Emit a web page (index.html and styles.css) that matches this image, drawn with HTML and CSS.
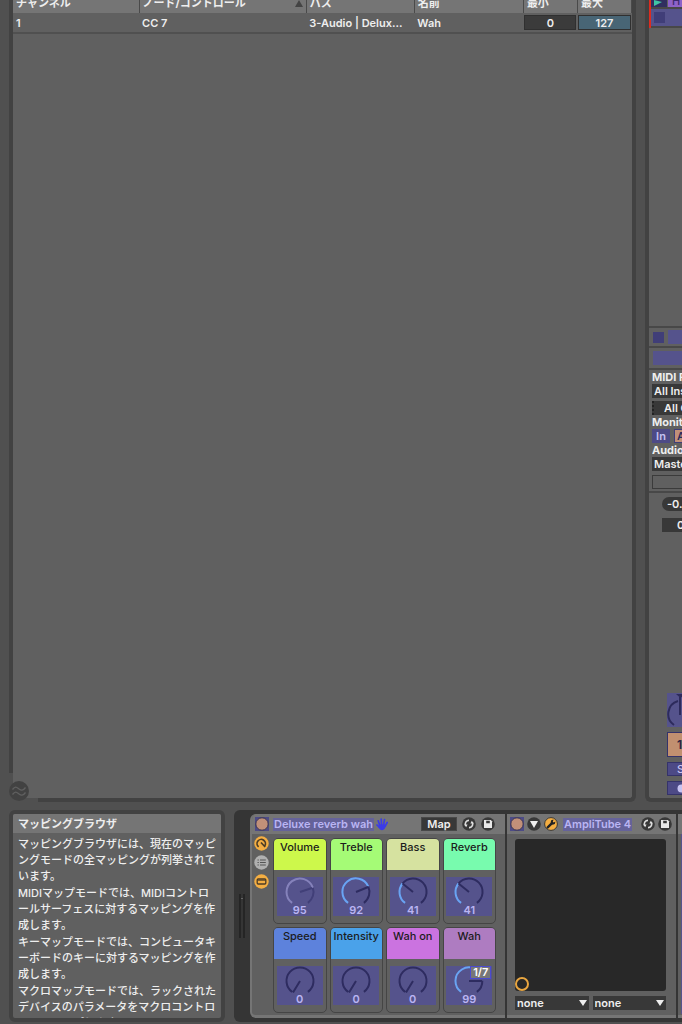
FILE: index.html
```html
<!DOCTYPE html>
<html lang="ja">
<head>
<meta charset="utf-8">
<title>マッピングブラウザ</title>
<link rel="stylesheet" href="styles.css">
</head>
<body>
<svg class="defs" aria-hidden="true">
  <symbol id="swap" viewBox="0 0 14 14"><circle cx="7" cy="7" r="6.8" fill="#383838"/><path d="M3.5 8A3.5 3.5 0 0 1 7 3.4M10.5 6A3.5 3.5 0 0 1 7 10.6" fill="none" stroke="#ddd" stroke-width="1.6"/><path d="M2 7.4h3.6L4.2 10.2zM8.4 6.6H12L9.8 3.8z" fill="#ddd"/></symbol>
  <symbol id="save" viewBox="0 0 14 14"><circle cx="7" cy="7" r="6.8" fill="#383838"/><path d="M3 3h6.8L11 4.2V11H3z" fill="#e8e8e8"/><path d="M5.2 3.8h3.6v2.4H5.2z" fill="#383838"/></symbol>
  <symbol id="power" viewBox="0 0 14 14"><path d="M0 0h14v14H0z" fill="#4d4b86"/><circle cx="7" cy="7" r="6.2" fill="#c19079" stroke="#383551"/></symbol>
  <symbol id="down" viewBox="0 0 8 6"><path d="M0 0h8L4 6z" fill="#eee"/></symbol>
</svg>
<main class="top">
  <section class="mapping">
    <table class="map-table">
      <colgroup><col class="c-channel"><col class="c-note"><col class="c-path"><col class="c-name"><col class="c-val"><col class="c-val"></colgroup>
      <thead><tr><th>チャンネル</th><th><span class="sorted">ノード/コントロール<svg viewBox="0 0 8 7" width="8" height="7"><path d="M4 0l4 7H0z" fill="#444"/></svg></span></th><th>パス</th><th>名前</th><th>最小</th><th>最大</th></tr></thead>
      <tbody><tr><td>1</td><td>CC 7</td><td>3-Audio | Delux...</td><td>Wah</td><td class="num"><input aria-label="最小" value="0"></td><td class="num"><input class="active" aria-label="最大" value="127"></td></tr></tbody>
    </table>
    <button class="wave" aria-label="Groove"><svg viewBox="0 0 20 20" width="20" height="20"><circle cx="10" cy="10" r="10" fill="#424242"/><path d="M3.5 8.5c3-4 4.500-2 6.500-.5s4 2 6.500-1.500M3.500 13.500c3-4 4.500-2 6.500-.5s4 2 6.500-1.500" fill="none" stroke="#606060" stroke-width="1.3"/></svg></button>
  </section>
  <section class="mixer">
    <div class="clips">
      <div class="clip"><button class="launch" aria-label="Launch"><svg viewBox="0 0 8 8" width="8" height="8"><path d="M0 0l8 2L0 6z" fill="#3fc6a4"/></svg></button><span class="clip-name">H</span></div>
      <div class="slot"><i></i></div>
    </div>
    <div class="track-io">
      <div class="stop"><i></i><b></b></div>
      <div class="send"><b></b></div>
      <div class="io">
        <label for="mf">MIDI From</label>
        <select id="mf"><option>All Ins</option></select>
        <select class="chan" aria-label="Channel"><option>All Channels</option></select>
        <span>Monitor</span>
        <div class="monitor"><button>In</button><button class="auto">Auto</button></div>
        <label for="at">Audio To</label>
        <select id="at"><option>Master</option></select>
        <div class="blank"></div>
      </div>
      <div class="level"><span class="peak">-0.00</span><span class="vol">0</span></div>
    </div>
    <div class="track-foot">
      <svg viewBox="0 0 34 34" width="34" height="34"><path d="M0 0h34v34H0z" fill="#55538c"/><path d="M7 32A13.500 13.500 0 0 1 11 8" fill="none" stroke="#2d2b5c" stroke-width="2"/><path d="M13 4V22" stroke="#2d2b5c" stroke-width="2"/><path d="M9 1h9l-4.500 4z" fill="#2d2b5c"/></svg>
      <button class="number">1</button>
      <button>S</button>
      <button aria-label="Arm"><svg viewBox="0 0 9 9" width="9" height="9"><circle cx="4.5" cy="4.5" r="4" fill="#c7c3f2"/><path d="M5 1.5a3 3 0 0 1 0 6z" fill="#353269"/></svg></button>
    </div>
  </section>
</main>
<footer class="bottom">
  <aside class="info">
    <h2>マッピングブラウザ</h2>
    <div class="help">
      <p>マッピングブラウザには、現在のマッピ<br>ングモードの全マッピングが列挙されて<br>います。</p>
      <p>MIDIマップモードでは、MIDIコントロ<br>ールサーフェスに対するマッピングを作<br>成します。</p>
      <p>キーマップモードでは、コンピュータキ<br>ーボードのキーに対するマッピングを作<br>成します。</p>
      <p>マクロマップモードでは、ラックされた<br>デバイスのパラメータをマクロコントロ<br>ールにマップします。</p>
    </div>
  </aside>
  <section class="devices">
    <div class="grip"></div>
    <article class="device rack">
      <header>
        <svg class="ico"><use href="#power"/></svg>
        <h3>Deluxe reverb wah</h3>
        <svg class="hand" viewBox="0 0 12 13" width="12" height="13"><g fill="none" stroke="#3b3be8" stroke-width="1.7" stroke-linecap="round"><path d="M3.8 7.5L2.2 2.8M5.6 7L5.2 1.2M7.6 7L8.5 1.6M9 8.5l2.2-4M3.5 9.5L1 7"/></g><path d="M3 6.5h6.5L9 10.5Q6.5 13.5 4 11.5L2 9z" fill="#3b3be8"/></svg>
        <button class="map-btn">Map</button>
        <svg class="ico"><use href="#swap"/></svg>
        <svg class="ico end"><use href="#save"/></svg>
      </header>
      <div class="rack-body">
        <div class="rail">
          <svg viewBox="0 0 15 15"><circle cx="7.5" cy="7.5" r="7.2" fill="#f4ae42"/><path d="M4.6 10.900A4.200 4.200 0 1 1 10.700 10M7 6.500l4.200 4.500" fill="none" stroke="#4d3d26" stroke-width="1.7"/></svg>
          <svg viewBox="0 0 15 15"><circle cx="7.5" cy="7.5" r="7.2" fill="#b0b0b0"/><path d="M3.5 5h1.3M6 5h5.8M3.5 7.5h1.3M6 7.5h5.8M3.5 10h1.3M6 10h5.8" stroke="#555" stroke-width="1.2"/></svg>
          <svg viewBox="0 0 15 15"><circle cx="7.5" cy="7.5" r="7.2" fill="#f4ae42"/><rect x="3.2" y="5" width="8.6" height="5" rx="1" fill="none" stroke="#4d3d26" stroke-width="1.3"/><path d="M3.5 6.2h8" stroke="#4d3d26"/></svg>
        </div>
        <div class="macros">
          <div class="macro volume"><h4>Volume</h4><div class="dial"><svg viewBox="0 0 46 28"><path class="rest dim" d="M35.8 10.6A13.5 13.5 0 0 1 30.9 25.9"/><path class="on dim" d="M15.1 25.9A13.5 13.5 0 1 1 35.8 10.6"/><path class="rest dim" d="M23 15L35 11"/></svg><output>95</output></div></div>
          <div class="macro treble"><h4>Treble</h4><div class="dial"><svg viewBox="0 0 46 28"><path class="rest" d="M35.2 9.3A13.5 13.5 0 0 1 30.9 25.9"/><path class="on" d="M15.1 25.9A13.5 13.5 0 1 1 35.2 9.3"/><path class="rest" d="M23 15L35.2 10"/></svg><output>92</output></div></div>
          <div class="macro bass"><h4>Bass</h4><div class="dial"><svg viewBox="0 0 46 28"><path class="rest" d="M12.5 6.5A13.5 13.5 0 1 1 30.9 25.9"/><path class="on" d="M15.1 25.9A13.5 13.5 0 0 1 12.5 6.5"/><path class="rest" d="M23 15L12.5 6.5"/></svg><output>41</output></div></div>
          <div class="macro reverb"><h4>Reverb</h4><div class="dial"><svg viewBox="0 0 46 28"><path class="rest" d="M12.5 6.5A13.5 13.5 0 1 1 30.9 25.9"/><path class="on" d="M15.1 25.9A13.5 13.5 0 0 1 12.5 6.5"/><path class="rest" d="M23 15L12.5 6.5"/></svg><output>41</output></div></div>
          <div class="macro speed"><h4>Speed</h4><div class="dial"><svg viewBox="0 0 46 28"><path class="rest" d="M15.1 25.9A13.5 13.5 0 1 1 30.9 25.9M23 15L16 26.5"/></svg><output>0</output></div></div>
          <div class="macro intensity"><h4>Intensity</h4><div class="dial"><svg viewBox="0 0 46 28"><path class="rest" d="M15.1 25.9A13.5 13.5 0 1 1 30.9 25.9M23 15L16 26.5"/></svg><output>0</output></div></div>
          <div class="macro wahon"><h4>Wah on</h4><div class="dial"><svg viewBox="0 0 46 28"><path class="rest" d="M15.1 25.9A13.5 13.5 0 1 1 30.9 25.9M23 15L16 26.5"/></svg><output>0</output></div></div>
          <div class="macro wah"><h4>Wah</h4><div class="dial"><svg viewBox="0 0 46 28"><path class="rest" d="M36.3 14.7A13.5 13.5 0 0 1 30.9 25.9"/><path class="on" d="M15.1 25.9A13.5 13.5 0 1 1 36.3 12.7"/><path class="rest" d="M23 15L36 15"/></svg><output>99</output><span class="tag">1/7</span></div></div>
        </div>
      </div>
    </article>
    <article class="device amp">
      <header>
        <svg class="ico"><use href="#power"/></svg>
        <svg class="ico" viewBox="0 0 14 14"><circle cx="7" cy="7" r="6.8" fill="#383838"/><path d="M3 4h8l-4 7z" fill="#eee"/></svg>
        <svg class="ico" viewBox="0 0 14 14"><circle cx="7" cy="7" r="6.4" fill="#f4ae42" stroke="#383838"/><path d="M3.7 10.4L8 6.2" stroke="#222" stroke-width="2.4" stroke-linecap="round"/><path d="M6.6 5.5L7.2 3.3 9.6 2.6 8.8 4.7 9.6 5.4 11.5 4.6 10.8 7 8.6 7.7z" fill="#222"/></svg>
        <h3>AmpliTube 4</h3>
        <svg class="ico push"><use href="#swap"/></svg>
        <svg class="ico"><use href="#save"/></svg>
      </header>
      <div class="pad"><i></i></div>
      <div class="params">
        <div class="pick"><select aria-label="X"><option>none</option></select><svg><use href="#down"/></svg></div>
        <div class="pick"><select aria-label="Y"><option>none</option></select><svg><use href="#down"/></svg></div>
      </div>
    </article>
    <article class="device next"><header></header><div class="edge"></div></article>
  </section>
</footer>
</body>
</html>
```

FILE: styles.css
```css
* { box-sizing: border-box; }
body { margin: 0; height: 100vh; display: flex; flex-direction: column; overflow: hidden; background: #505050; color: #eee; font: 500 11px/16px Inter, "Noto Sans CJK JP", sans-serif; }
h2, h3, h4, p { margin: 0; font-size: 11px; }
button, select, input { font: inherit; color: inherit; margin: 0; padding: 0; border: 0; border-radius: 0; background: none; }
select { appearance: none; }
svg { display: block; flex: none; }
.defs { position: absolute; width: 0; height: 0; }

.top { flex: 1; min-height: 0; display: flex; gap: 9px; padding-left: 9px; }
.mapping { position: relative; flex: 1; min-width: 0; border: 4px solid #424242; border-top: 0; border-radius: 0 0 6px 6px; background: #606060; }
.mapping::after { content: ""; position: absolute; left: -4px; bottom: -4px; width: 25px; height: 25px; border: solid #505050; border-width: 0 0 4px 4px; }
.wave { position: absolute; z-index: 1; left: -4px; bottom: -3px; }
.map-table { width: 100%; margin-top: -7px; table-layout: fixed; border-collapse: collapse; }
.c-channel { width: 126px; }
.c-note { width: 167px; }
.c-path { width: 108px; }
.c-name { width: 109px; }
.c-val { width: 54px; }
.map-table th { height: 20px; padding: 0 3px; background: #757575; border-right: 1px solid #4a4a4a; text-align: left; font-weight: 700; line-height: 18px; white-space: nowrap; }
.map-table td { height: 20px; padding: 0 3px; border-bottom: 2px solid #505050; font-weight: 600; white-space: nowrap; }
.map-table td.num { padding: 0 1px; }
.sorted { display: flex; align-items: center; justify-content: space-between; }
.map-table input { display: block; width: 100%; height: 15px; border: 1px solid #303030; background: #3b3b3b; text-align: center; }
.map-table input.active { background: #486575; }

.mixer { flex: 0 0 37px; display: flex; flex-direction: column; overflow: hidden; border: solid #424242; border-width: 0 0 4px 4px; border-radius: 0 0 0 6px; background: #606060; white-space: nowrap; }
.clips { border-left: 2px solid #dc2c20; }
.clip { display: flex; gap: 1px; height: 9px; overflow: hidden; border-bottom: 2px solid #484848; }
.launch { width: 16px; padding-left: 3px; background: #302e5f; }
.clip-name { flex: 1; padding-left: 4px; background: #8d62c8; color: #3b2a6e; line-height: 2px; }
.slot, .stop { display: flex; gap: 4px; }
.slot { height: 19px; padding: 3px; background: #55538c; border-bottom: 2px solid #484848; }
.slot i, .stop i { flex: none; width: 11px; height: 11px; background: #403e78; }
.track-io { margin-top: 298px; border-top: 2px solid #484848; }
.stop { height: 20px; padding: 2px 0 2px 4px; align-items: center; border-bottom: 2px solid #484848; }
.stop b, .send b { flex: 1; height: 14px; background: #55538c; }
.send { display: flex; padding: 3px 0 3px 4px; border-bottom: 2px solid #484848; }
.io { display: flex; flex-direction: column; padding: 0 0 2px 3px; border-bottom: 2px solid #484848; font-weight: 600; }
.io label, .io > span { line-height: 14px; overflow: hidden; font-weight: 700; }
.io select { width: 80px; height: 14px; padding-left: 2px; background: #383838; line-height: 14px; }
.io .chan { margin-top: 3px; padding-left: 10px; border-left: 2px dotted #222; }
.monitor { display: flex; gap: 4px; height: 14px; line-height: 14px; }
.monitor button { flex: none; width: 18px; background: #4d4a86; color: #c7c3f2; }
.monitor .auto { width: 40px; padding-left: 2px; background: #c19079; border: 1px solid #403e78; color: #2d2b5c; text-align: left; line-height: 12px; }
.blank { height: 14px; margin-top: 4px; border: 1px solid #3b3b3b; border-right: 0; }
.level { display: grid; gap: 7px; padding: 4px 0 0 13px; font-weight: 600; line-height: 14px; }
.level span { width: 50px; height: 14px; background: #383838; }
.peak { padding-left: 5px; border-radius: 7px; }
.vol { padding-left: 15px; }
.track-foot { display: grid; gap: 5px; justify-items: start; margin-top: auto; padding: 0 0 3px 18px; }
.track-foot button { display: flex; align-items: center; width: 40px; height: 14px; padding-left: 9px; background: #4d4a86; border: 1px solid #35336a; color: #c7c3f2; }
.track-foot button.number { height: 25px; background: #c19070; color: #2d2444; font-size: 12px; font-weight: 700; }

.bottom { flex: none; display: flex; gap: 9px; height: 222px; padding: 8px 0 2px 9px; }
.info { flex: none; width: 216px; overflow: hidden; border: 4px solid #424242; border-radius: 6px; background: #606060; }
.info h2 { height: 19px; padding: 0 5px; background: #757575; line-height: 21px; font-weight: 700; }
.help { display: grid; gap: 1px; padding: 3px 0 0 5px; white-space: nowrap; }
.devices { flex: 1; min-width: 0; display: flex; gap: 2px; overflow: hidden; padding: 4px 0; border-radius: 6px 0 0 6px; background: #353535; }
.grip { flex: none; width: 6px; height: 44px; margin: 80px 3px 0 5px; border: solid #252525; border-width: 0 2px; background: linear-gradient(#666, #666) 0 4px / 6px 1px no-repeat border-box; }
.device { background: #606060; border-bottom: 3px solid #757575; }
.device header { display: flex; align-items: center; height: 20px; background: #757575; }
.device h3 { padding: 0 1px; background: #65629a; color: #bab5f3; font-weight: 600; line-height: 13px; white-space: nowrap; }
.ico { width: 14px; height: 14px; }
.rack { flex: none; width: 255px; border-left: 2px solid #757575; border-radius: 6px 0 0 6px; overflow: hidden; }
.rack header { padding: 0 10px 0 3px; }
.rack h3 { margin: 0 2px 0 4px; }
.map-btn { width: 36px; height: 14px; margin: 0 5px 0 auto; border: 1px solid #484848; background: #383838; line-height: 12px; font-weight: 600; }
.end { margin-left: 5px; }
.rack-body { display: flex; gap: 4px; padding: 4px 9px 0 2px; }
.rail { display: grid; gap: 4px; align-content: start; margin-top: -2px; }
.rail svg { width: 15px; height: 15px; }
.macros { flex: 1; display: grid; grid-template-columns: repeat(4, 1fr); gap: 3px; }
.macro { height: 86px; border: 1px solid #454545; border-radius: 5px; }
.macro h4 { height: 31px; margin-bottom: 7px; border-radius: 4px 4px 0 0; color: #1c1c1c; font-weight: 500; line-height: 17px; text-align: center; white-space: nowrap; }
.dial { position: relative; width: 46px; height: 39px; margin: 0 auto; background: #55538c; color: #bab5f3; text-align: center; font-weight: 600; line-height: 11px; }
.dial svg { width: 46px; height: 28px; }
.dial path { fill: none; stroke-width: 2; }
.dial output { display: block; }
.on { stroke: #69a4f3; }
.rest { stroke: #2e2c60; }
.on.dim { stroke: #8582bb; }
.rest.dim { stroke: #413f78; }
.volume h4 { background: #cdf84b; }
.treble h4 { background: #a5fb76; }
.bass h4 { background: #d6e2a0; }
.reverb h4 { background: #78fbae; }
.speed h4 { background: #5d82dc; }
.intensity h4 { background: #4aa2ea; }
.wahon h4 { background: #cb73e0; }
.wah h4 { background: #ae7cc1; }
.tag { position: absolute; right: 1px; top: 0; width: 21px; height: 13px; border: 1px solid #4b4bd0; background: #777; color: #fff; }

.amp { flex: none; width: 169px; }
.amp header { gap: 3px; padding: 0 4px 0 3px; }
.amp h3 { margin-left: 2px; }
.push { margin-left: auto; }
.pad { display: flex; align-items: flex-end; height: 152px; margin: 5px 10px 5px 8px; border-radius: 3px; background: #282828; }
.pad i { width: 14px; height: 14px; border: 2px solid #e9a640; border-radius: 50%; }
.params { display: grid; grid-template-columns: 1fr 1fr; gap: 4px; margin: 0 10px 0 8px; }
.pick { display: grid; align-items: center; background: #383838; }
.pick select, .pick svg { grid-area: 1 / 1; }
.pick select { height: 14px; padding-left: 2px; line-height: 14px; font-weight: 600; }
.pick svg { width: 8px; height: 6px; margin-right: 2px; justify-self: end; pointer-events: none; }
.next { flex: 1; }
.edge { height: 180px; margin-left: 3px; background: #55538c; }
```
